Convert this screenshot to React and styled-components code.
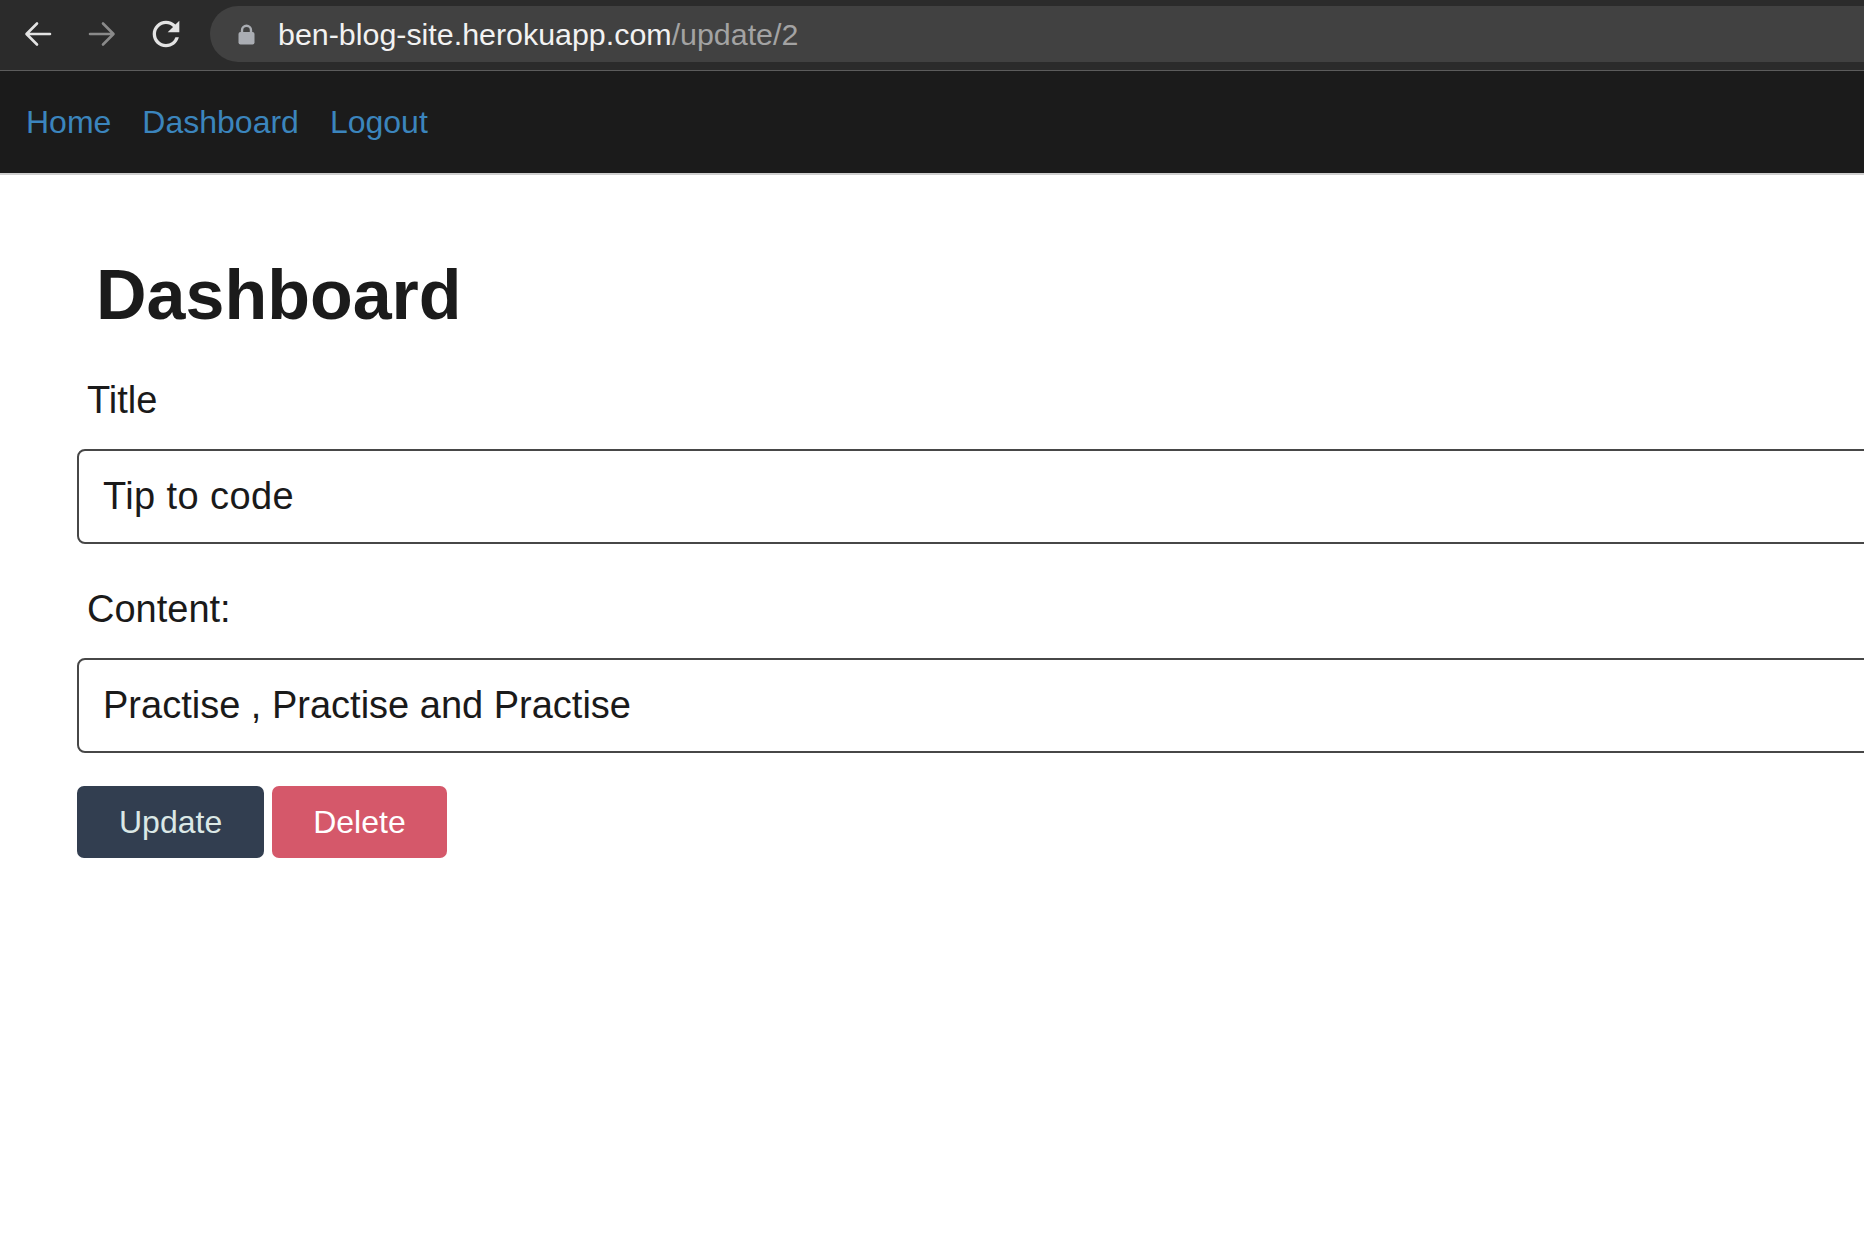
import React from "react";
import styled, { createGlobalStyle } from "styled-components";

const GlobalStyle = createGlobalStyle`
  html, body {
    margin: 0;
    padding: 0;
    background: #ffffff;
    overflow: hidden;
  }
  * { box-sizing: border-box; }
`;

const Window = styled.div`
  width: 100%;
  min-height: 1240px;
  overflow: hidden;
  font-family: "Liberation Sans", Arial, Helvetica, sans-serif;
  background: #ffffff;
`;

const BrowserBar = styled.div`
  display: flex;
  align-items: center;
  height: 71px;
  padding: 0 0 2px 18px;
  background: #2b2b2b;
  border-bottom: 1px solid #5c5c5c;
`;

const IconGroup = styled.div`
  display: flex;
  align-items: center;
  gap: 24px;
`;

const IconButton = styled.div`
  width: 40px;
  height: 40px;
  display: flex;
  align-items: center;
  justify-content: center;
  color: ${(p) => (p.$dim ? "#8a8a8a" : "#e3e3e3")};
`;

const AddressPill = styled.div`
  flex: 1;
  height: 56px;
  margin-left: 24px;
  border-radius: 28px 0 0 28px;
  background: #414141;
  display: flex;
  align-items: center;
  padding-left: 28px;
  gap: 23px;
`;

const Url = styled.span`
  font-size: 30.4px;
  color: #f2f2f2;
`;

const UrlPath = styled.span`
  color: #a3a3a3;
`;

const NavBar = styled.nav`
  display: flex;
  align-items: center;
  height: 104px;
  padding-left: 26px;
  gap: 31px;
  background: #1b1b1b;
  border-bottom: 2px solid #cfcfcf;
`;

const NavLink = styled.a`
  font-size: 32px;
  color: #3b85bd;
  text-decoration: none;
  cursor: pointer;
`;

const Main = styled.main`
  padding: 80px 0 0 77px;
`;

const Heading = styled.h1`
  margin: 0 0 43px 19px;
  font-size: 70px;
  line-height: 80px;
  font-weight: 700;
  color: #1b1b1b;
`;

const Field = styled.div`
  display: flex;
  flex-direction: column;
  margin-bottom: ${(p) => p.$gap || 0}px;
`;

const Label = styled.label`
  margin: 0 0 27px 10px;
  font-size: 38px;
  line-height: 44px;
  color: #1a1a1a;
`;

const TextInput = styled.input`
  width: 1860px;
  height: 95px;
  padding: 0 0 0 24px;
  border: 2px solid #474747;
  border-radius: 8px;
  font-family: "Liberation Sans", Arial, Helvetica, sans-serif;
  font-size: 38px;
  letter-spacing: ${(p) => p.$spacing || 0}px;
  color: #1a1a1a;
  background: #ffffff;
  outline: none;
`;

const ButtonRow = styled.div`
  display: flex;
  gap: 8px;
`;

const Button = styled.button`
  height: 72px;
  padding: 0 ${(p) => (p.$variant === "danger" ? 41 : 42)}px;
  border: none;
  border-radius: 7px;
  font-family: "Liberation Sans", Arial, Helvetica, sans-serif;
  font-size: 32px;
  cursor: pointer;
  background: ${(p) => (p.$variant === "danger" ? "#d5586a" : "#323e50")};
  color: ${(p) => (p.$variant === "danger" ? "#ffffff" : "#dbe8e6")};
`;

const ArrowIcon = ({ flip }) => (
  <svg
    width="28"
    height="26"
    viewBox="0 0 28 26"
    fill="none"
    stroke="currentColor"
    strokeWidth="2.6"
    strokeLinecap="round"
    strokeLinejoin="round"
    style={flip ? { transform: "scaleX(-1)" } : undefined}
  >
    <path d="M26 13H3M13 2.5L2.5 13 13 23.5" />
  </svg>
);

const ReloadIcon = () => (
  <svg width="28" height="28" viewBox="3.6 3.6 16.8 16.8" fill="currentColor">
    <path d="M17.65 6.35A7.958 7.958 0 0 0 12 4c-4.42 0-7.99 3.58-7.99 8s3.57 8 7.99 8c3.73 0 6.84-2.55 7.73-6h-2.08A5.99 5.99 0 0 1 12 18c-3.31 0-6-2.69-6-6s2.69-6 6-6c1.66 0 3.14.69 4.22 1.78L13 11h7V4l-2.35 2.35z" />
  </svg>
);

const LockIcon = () => (
  <svg width="17" height="21" viewBox="0 0 17 21">
    <path
      d="M4 9V6.2a4.5 4.5 0 0 1 9 0V9"
      fill="none"
      stroke="#aaadb3"
      strokeWidth="2.4"
    />
    <rect x="0.5" y="8" width="16" height="12.5" rx="2" fill="#aaadb3" />
  </svg>
);

export default function App() {
  return (
    <>
      <GlobalStyle />
      <Window>
        <BrowserBar>
          <IconGroup>
            <IconButton>
              <ArrowIcon />
            </IconButton>
            <IconButton $dim>
              <ArrowIcon flip />
            </IconButton>
            <IconButton>
              <ReloadIcon />
            </IconButton>
          </IconGroup>
          <AddressPill>
            <LockIcon />
            <Url>
              ben-blog-site.herokuapp.com<UrlPath>/update/2</UrlPath>
            </Url>
          </AddressPill>
        </BrowserBar>
        <NavBar>
          <NavLink>Home</NavLink>
          <NavLink>Dashboard</NavLink>
          <NavLink>Logout</NavLink>
        </NavBar>
        <Main>
          <Heading>Dashboard</Heading>
          <Field $gap={43}>
            <Label>Title</Label>
            <TextInput defaultValue="Tip to code" $spacing={0.4} />
          </Field>
          <Field $gap={33}>
            <Label>Content:</Label>
            <TextInput defaultValue="Practise , Practise and Practise" />
          </Field>
          <ButtonRow>
            <Button>Update</Button>
            <Button $variant="danger">Delete</Button>
          </ButtonRow>
        </Main>
      </Window>
    </>
  );
}
